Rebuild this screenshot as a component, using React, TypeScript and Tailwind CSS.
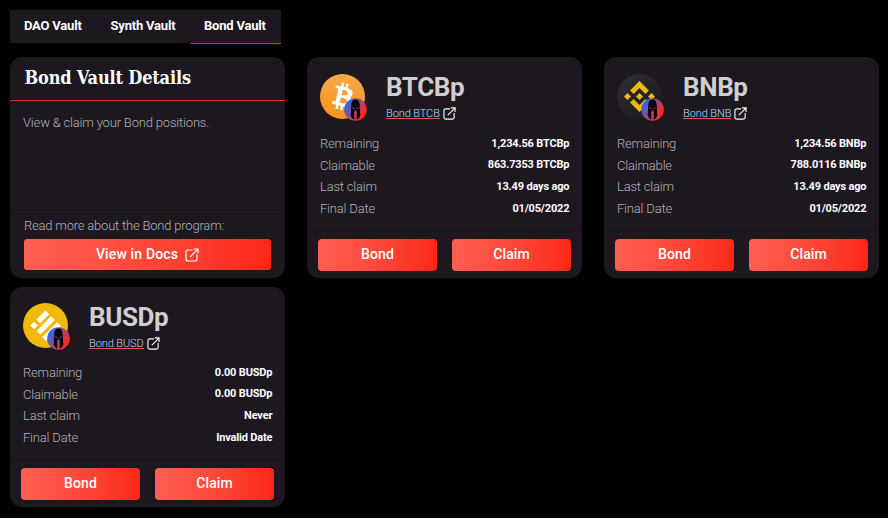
import type { ReactNode } from "react";

function ExternalIcon({ className }: { className: string }) {
  return (
    <svg viewBox="0 0 14 14" fill="none" stroke="white" strokeWidth="1.2" className={className}>
      <path d="M7.500 2H3Q1 2 1 4V11Q1 13 3 13H10Q12 13 12 11V6.500" />
      <path d="M5.200 8.800L12.900 1.100M8.500 1H13V5.500" />
    </svg>
  );
}

function BtcLogo() {
  return (
    <svg viewBox="0 0 45 45" className="size-[45px]">
      <defs>
        <linearGradient id="btc" x1="0" y1="0" x2="0" y2="1">
          <stop offset="0" stopColor="#f9aa4b" />
          <stop offset="1" stopColor="#f7931a" />
        </linearGradient>
      </defs>
      <circle cx="22.5" cy="22.5" r="22.500" fill="url(#btc)" />
      <g transform="translate(0.1 0.1) scale(1.4)" fill="white">
        <path d="M23.189 14.020c.314-2.096-1.283-3.223-3.465-3.975l.708-2.840-1.728-.430-.690 2.765c-.454-.114-.920-.220-1.385-.326l.695-2.783L15.596 6l-.708 2.839c-.376-.086-.746-.170-1.104-.260l.002-.009-2.384-.595-.460 1.846s1.283.294 1.256.312c.700.175.826.638.805 1.006l-.806 3.235c.048.012.110.030.180.057l-.183-.045-1.130 4.532c-.086.212-.303.531-.793.410.018.025-1.256-.313-1.256-.313l-.858 1.978 2.250.561c.418.105.828.215 1.231.318l-.715 2.872 1.727.430.708-2.840c.472.127.930.245 1.378.357l-.706 2.828 1.728.430.715-2.866c2.948.558 5.164.333 6.097-2.333.752-2.146-.037-3.385-1.588-4.192 1.130-.260 1.980-1.003 2.207-2.538zm-3.950 5.538c-.533 2.147-4.148.986-5.320.695l.950-3.805c1.172.293 4.929.872 4.370 3.110zm.535-5.569c-.487 1.953-3.495.960-4.470.717l.860-3.450c.975.243 4.118.696 3.610 2.733z" />
      </g>
    </svg>
  );
}

function BnbLogo() {
  return (
    <svg viewBox="0 0 45 45" className="size-[45px]">
      <defs>
        <linearGradient id="bnb" x1="0" y1="0" x2="1" y2="1">
          <stop offset="0" stopColor="#303030" />
          <stop offset="1" stopColor="#181719" />
        </linearGradient>
      </defs>
      <circle cx="22.5" cy="22.5" r="22.500" fill="url(#bnb)" />
      <g fill="#f0b90b">
        <path d="M22.500 7L31.900 16.400L28.400 19.900L22.500 14L16.600 19.900L13.100 16.400Z" />
        <path d="M22.500 38L13.100 28.600L16.600 25.100L22.500 31L28.400 25.100L31.900 28.600Z" />
        <path d="M22.500 19L26 22.500L22.500 26L19 22.500ZM10.500 19L14 22.500L10.500 26L7 22.500ZM34.500 19L38 22.500L34.500 26L31 22.500Z" />
      </g>
    </svg>
  );
}

function BusdLogo() {
  return (
    <svg viewBox="0 0 45 45" className="size-[45px]">
      <circle cx="22.5" cy="22.5" r="22.500" fill="#f0b90b" />
      <g fill="white">
        <path d="M22.500 7.500L26.200 11.200L17.200 20.200L13.500 16.500Z" />
        <path d="M28.500 13.500L32.200 17.200L17.700 31.700L14 28Z" transform="translate(-.300 -.300)" />
        <path d="M11 18.800L14.700 22.500L11 26.200L7.300 22.500Z" />
        <path d="M34.200 19.200L37.900 22.900L22.900 37.900L19.200 34.200Z" />
      </g>
    </svg>
  );
}

function SpartanBadge() {
  return (
    <svg viewBox="0 0 23 23" className="absolute -bottom-[2px] -right-[2px] size-[23px]">
      <defs>
        <linearGradient id="spartan" x1="0" y1=".15" x2="1" y2=".75">
          <stop offset=".080" stopColor="#246bfa" />
          <stop offset=".850" stopColor="#f92b22" />
        </linearGradient>
      </defs>
      <circle cx="11.5" cy="11.5" r="11.300" fill="url(#spartan)" />
      <path
        d="M11.500 1.500C8.500 1.500 7.300 4 7.300 8L6.700 17.500L8.300 20.500L10.300 21.500L10.100 14L11.500 11.500L12.900 14L12.700 21.500L14.700 20.500L16.300 17.500L15.700 8C15.700 4 14.500 1.500 11.500 1.500Z"
        fill="#090207"
      />
      <path d="M8 8.800L10.700 10.400L10.300 11.300L8.600 10.500ZM15 8.800L12.300 10.400L12.700 11.300L14.400 10.500Z" fill="#8a3c9a" />
    </svg>
  );
}

const fill = "bg-linear-to-r from-[#ff5f52] to-[#fb2715]";

function Action({ children }: { children: ReactNode }) {
  return (
    <button className={`${fill} h-8 flex-1 rounded-[4px] pb-[2px] text-[14px] font-medium leading-[30px] tracking-[.1px] text-white`}>
      {children}
    </button>
  );
}

type Vault = { symbol: string; logo: ReactNode; rows: [string, string][]; lower?: boolean };

const vaults: Vault[] = [
  {
    symbol: "BTCB",
    logo: <BtcLogo />,
    rows: [
      ["Remaining", "1,234.56 BTCBp"],
      ["Claimable", "863.7353 BTCBp"],
      ["Last claim", "13.49 days ago"],
      ["Final Date", "01/05/2022"],
    ],
  },
  {
    symbol: "BNB",
    logo: <BnbLogo />,
    rows: [
      ["Remaining", "1,234.56 BNBp"],
      ["Claimable", "788.0116 BNBp"],
      ["Last claim", "13.49 days ago"],
      ["Final Date", "01/05/2022"],
    ],
  },
  {
    symbol: "BUSD",
    logo: <BusdLogo />,
    lower: true,
    rows: [
      ["Remaining", "0.00 BUSDp"],
      ["Claimable", "0.00 BUSDp"],
      ["Last claim", "Never"],
      ["Final Date", "Invalid Date"],
    ],
  },
];

function VaultCard({ symbol, logo, rows, lower }: Vault) {
  return (
    <article className={`flex flex-col overflow-hidden rounded-xl bg-[#1d171f] ${lower ? "pt-4" : "pt-[17px]"}`}>
      <div className="flex h-[59px] pl-[13px]">
        <div className="relative size-[45px]">
          {logo}
          <SpartanBadge />
        </div>
        <div className={`ml-[21px] ${lower ? "pt-px" : ""}`}>
          <h2 className="h-[31px] text-[26px] font-bold leading-[26px] tracking-[-.4px] text-[#cfcfcf]">{symbol}p</h2>
          <div className="flex items-start">
            <a className="h-[14px] border-b border-[#fb4a3c] text-[11px] font-light leading-[17px] tracking-[-.1px] text-[#b5dcff]">
              Bond {symbol}
            </a>
            <ExternalIcon className="ml-[3px] mt-[2px] size-[13px]" />
          </div>
        </div>
      </div>
      <dl className="h-[98px] px-[13px]">
        {rows.map(([label, value]) => (
          <div key={label} className="flex h-[21.7px] items-center justify-between">
            <dt className="text-[13px] font-light tracking-[-.19px] text-[#b2b5b8]">{label}</dt>
            <dd className="-mr-[.3px] text-[11px] font-bold tracking-[-.18px] text-white">{value}</dd>
          </div>
        ))}
      </dl>
      <div className="flex gap-[15px] border-t border-[#19131a] px-[11px] pt-[7px]">
        <Action>Bond</Action>
        <Action>Claim</Action>
      </div>
    </article>
  );
}

export default function App() {
  return (
    <main className="h-[518px] w-[888px] overflow-hidden bg-black pl-[10px] pt-[10px] font-['Roboto',sans-serif]">
      <nav className="flex h-[34px] w-[271px] text-[13px] font-bold leading-[31px] tracking-[-.2px] text-white">
        <span className="h-[33px] w-[86px] bg-[#1d171f] pl-[14px]">DAO Vault</span>
        <span className="h-[33px] w-[94px] bg-[#1d171f] pl-[14.5px]">Synth Vault</span>
        <span className="h-[34px] w-[91px] border-b border-[#fb2715] bg-[#1d171f] pl-[14px]">Bond Vault</span>
      </nav>
      <section className="mt-[13px] grid grid-cols-[275px_275px_275px] grid-rows-[221px_220px] gap-x-[22px] gap-y-[9px]">
        <article className="flex flex-col rounded-xl bg-[#1d171f]">
          <h1 className="h-[44px] whitespace-nowrap border-b border-[#fb2715] pl-[14.5px] font-['DejaVu_Serif_Condensed','DejaVu_Serif',serif] text-[18px] font-bold leading-[42px] tracking-[-.17px] text-white">
            Bond Vault Details
          </h1>
          <p className="h-[108px] pl-[13px] pt-[12px] text-[13px] font-light leading-[20px] tracking-[-.18px] text-[#b2b5b8]">
            View &amp; claim your Bond positions.
          </p>
          <div className="border-t border-[#19131a] px-[14px] pt-[6px]">
            <p className="text-[13px] font-light leading-[20px] tracking-[-.2px] text-[#b2b5b8]">Read more about the Bond program:</p>
            <button className={`${fill} mt-[3px] flex h-[31px] w-full items-center justify-center rounded-[3px] text-[14px] font-medium tracking-[.15px] text-white`}>
              View in Docs
              <ExternalIcon className="ml-[7px] size-[14px]" />
            </button>
          </div>
        </article>
        {vaults.map((vault) => (
          <VaultCard key={vault.symbol} {...vault} />
        ))}
      </section>
    </main>
  );
}
